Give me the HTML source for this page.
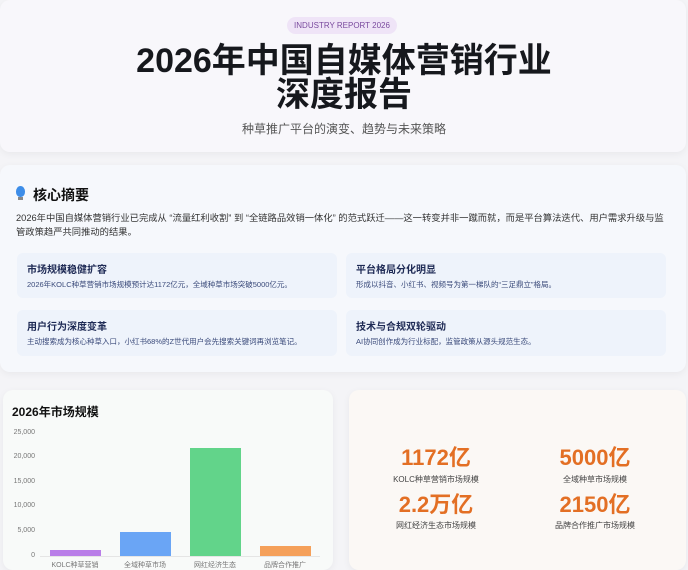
<!DOCTYPE html><html><head><meta charset="utf-8"><style>
*{margin:0;padding:0;box-sizing:border-box}
body{width:688px;height:565px;overflow:hidden;background:#f4f4f7;font-family:"Liberation Sans","Noto Sans CJK SC",sans-serif;position:relative}
.a{position:absolute}
.card{position:absolute;background:#fafbfd;border-radius:10px;box-shadow:0 2px 8px rgba(0,0,0,.05)}
.box{position:absolute;background:#eef3fb;border-radius:6px}
.box b{position:absolute;left:10px;top:8px;font-size:10px;color:#1e2a55}
.box span{position:absolute;left:10px;top:26px;font-size:7.5px;color:#3a4a7a;white-space:nowrap}
.num{position:absolute;width:160px;text-align:center;color:#e36f24;font-weight:bold;font-size:22px;line-height:24px}
.lab{position:absolute;width:160px;text-align:center;color:#444;font-size:8px}
.yl{position:absolute;left:0;width:35px;text-align:right;font-size:7px;color:#777}
.xl{position:absolute;top:560px;width:70px;text-align:center;font-size:7px;color:#777}
</style></head><body>
<div class="card" style="left:0;top:0;width:686px;height:152px;background:#f8f7fb"></div>
<div class="a" style="left:287px;top:17px;width:110px;height:17px;border-radius:9px;background:#efe4f7;color:#7a4a9e;font-size:8px;text-align:center;line-height:17px">INDUSTRY REPORT 2026</div>
<div class="a" style="left:0;top:44px;width:688px;text-align:center;font-size:34px;line-height:34px;font-weight:bold;color:#16181d">2026年中国自媒体营销行业<br>深度报告</div>
<div class="a" style="left:0;top:120px;width:688px;text-align:center;font-size:12px;color:#555">种草推广平台的演变、趋势与未来策略</div>

<div class="card" style="left:0;top:165px;width:686px;height:207px;background:#f6f8fc"></div>
<div class="a" style="left:16px;top:186px;width:9px;height:11px;border-radius:50% 50% 45% 45%;background:#3d8de8"></div>
<div class="a" style="left:18px;top:197px;width:5px;height:3px;background:#888"></div>
<div class="a" style="left:33px;top:185px;font-size:14px;font-weight:bold;color:#111">核心摘要</div>
<div class="a" style="left:16px;top:211px;width:656px;font-size:9.3px;line-height:14px;color:#333">2026年中国自媒体营销行业已完成从 “流量红利收割” 到 “全链路品效销一体化” 的范式跃迁——这一转变并非一蹴而就，而是平台算法迭代、用户需求升级与监管政策趋严共同推动的结果。</div>
<div class="box" style="left:17px;top:253px;width:320px;height:45px"><b>市场规模稳健扩容</b><span>2026年KOLC种草营销市场规模预计达1172亿元，全域种草市场突破5000亿元。</span></div>
<div class="box" style="left:346px;top:253px;width:320px;height:45px"><b>平台格局分化明显</b><span>形成以抖音、小红书、视频号为第一梯队的“三足鼎立”格局。</span></div>
<div class="box" style="left:17px;top:310px;width:320px;height:46px"><b>用户行为深度变革</b><span>主动搜索成为核心种草入口，小红书68%的Z世代用户会先搜索关键词再浏览笔记。</span></div>
<div class="box" style="left:346px;top:310px;width:320px;height:46px"><b>技术与合规双轮驱动</b><span>AI协同创作成为行业标配，监管政策从源头规范生态。</span></div>

<div class="card" style="left:3px;top:390px;width:330px;height:180px;background:#f8faf9"></div>
<div class="a" style="left:12px;top:403px;font-size:12px;font-weight:bold;color:#111">2026年市场规模</div>
<div class="yl" style="top:429px">25,000</div>
<div class="yl" style="top:453px">20,000</div>
<div class="yl" style="top:478px">15,000</div>
<div class="yl" style="top:502px">10,000</div>
<div class="yl" style="top:527px">5,000</div>
<div class="yl" style="top:552px">0</div>
<div class="a" style="left:50px;top:550px;width:51px;height:6px;background:#b97ee8"></div>
<div class="a" style="left:120px;top:532px;width:51px;height:24px;background:#6aa5f5"></div>
<div class="a" style="left:190px;top:448px;width:51px;height:108px;background:#62d48a"></div>
<div class="a" style="left:260px;top:546px;width:51px;height:10px;background:#f5a05a"></div>
<div class="a" style="left:40px;top:556px;width:280px;height:1px;background:#e5e5e5"></div>
<div class="xl" style="left:40px">KOLC种草营销</div>
<div class="xl" style="left:110px">全域种草市场</div>
<div class="xl" style="left:180px">网红经济生态</div>
<div class="xl" style="left:250px">品牌合作推广</div>

<div class="card" style="left:349px;top:390px;width:337px;height:180px;background:#fbf8f5"></div>
<div class="num" style="left:356px;top:446px">1172亿</div>
<div class="lab" style="left:356px;top:474px">KOLC种草营销市场规模</div>
<div class="num" style="left:515px;top:446px">5000亿</div>
<div class="lab" style="left:515px;top:474px">全域种草市场规模</div>
<div class="num" style="left:356px;top:493px">2.2万亿</div>
<div class="lab" style="left:356px;top:520px">网红经济生态市场规模</div>
<div class="num" style="left:515px;top:493px">2150亿</div>
<div class="lab" style="left:515px;top:520px">品牌合作推广市场规模</div>
</body></html>
